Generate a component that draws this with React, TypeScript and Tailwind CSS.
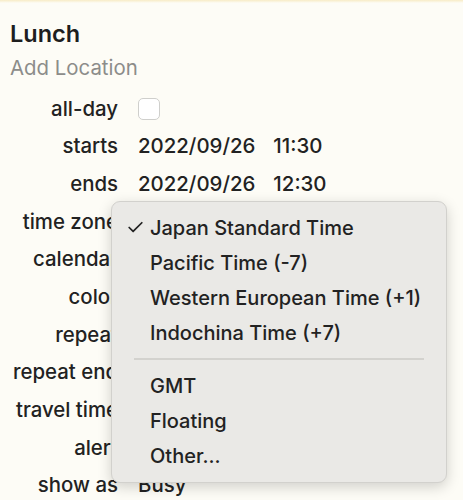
import { Check } from "lucide-react";

const rows: { label: string; value?: string; time?: string; checkbox?: boolean }[] = [
  { label: "all-day", checkbox: true },
  { label: "starts", value: "2022/09/26", time: "11:30" },
  { label: "ends", value: "2022/09/26", time: "12:30" },
  { label: "time zone" },
  { label: "calendar" },
  { label: "color" },
  { label: "repeat" },
  { label: "repeat end" },
  { label: "travel time" },
  { label: "alert" },
  { label: "show as", value: "Busy" },
];

const zones = ["Japan Standard Time", "Pacific Time (-7)", "Western European Time (+1)", "Indochina Time (+7)"];
const others = ["GMT", "Floating", "Other..."];

function MenuItem({ text, checked }: { text: string; checked?: boolean }) {
  return (
    <div className="flex h-[35px] items-center">
      <span className="flex w-[38px] justify-end pr-[5px]">
        {checked && <Check size={19} strokeWidth={2.2} className="text-[#222]" />}
      </span>
      <span>{text}</span>
    </div>
  );
}

export default function App() {
  return (
    <div
      className="relative h-[500px] w-[463px] overflow-hidden bg-[#fdfcf6] text-[20.4px] font-medium text-[#222]"
      style={{ fontFamily: "Inter, 'Noto Sans', sans-serif" }}
    >
      <div className="h-[3px] bg-gradient-to-b from-[#f8ecc6] to-[#fdfcf6]" />

      <div className="px-[10px] pt-[16px]">
        <h1 className="h-[30px] text-[23.5px] leading-[30px] font-semibold text-[#1e1e1e]">Lunch</h1>
        <p className="mt-[4px] h-[30px] leading-[30px] font-normal text-[#8c8c8a]">Add Location</p>
      </div>

      <div className="mt-[7px] flex flex-col">
        {rows.map((r) => (
          <div key={r.label} className="flex h-[37.7px] items-center">
            <span className="w-[118px] shrink-0 overflow-hidden text-right whitespace-nowrap">{r.label}</span>
            <div className="ml-[20px] flex items-center">
              {r.checkbox && (
                <span className="block h-[22px] w-[22px] rounded-[5px] border border-[#cfcfcc] bg-white" />
              )}
              {r.value && <span>{r.value}</span>}
              {r.time && <span className="ml-[18px]">{r.time}</span>}
            </div>
          </div>
        ))}
      </div>

      <div className="absolute top-[201px] left-[111px] w-[336px] rounded-[9px] border border-[#d2d1cd] bg-[#eae9e6] pt-[8px] pb-[9px] text-[20px] shadow-[0_4px_14px_rgba(0,0,0,0.18)]">
        {zones.map((z, i) => (
          <MenuItem key={z} text={z} checked={i === 0} />
        ))}
        <div className="flex h-[18px] items-center px-[22px]">
          <div className="h-[2px] w-full bg-[#d3d2ce]" />
        </div>
        {others.map((o) => (
          <MenuItem key={o} text={o} />
        ))}
      </div>
    </div>
  );
}
